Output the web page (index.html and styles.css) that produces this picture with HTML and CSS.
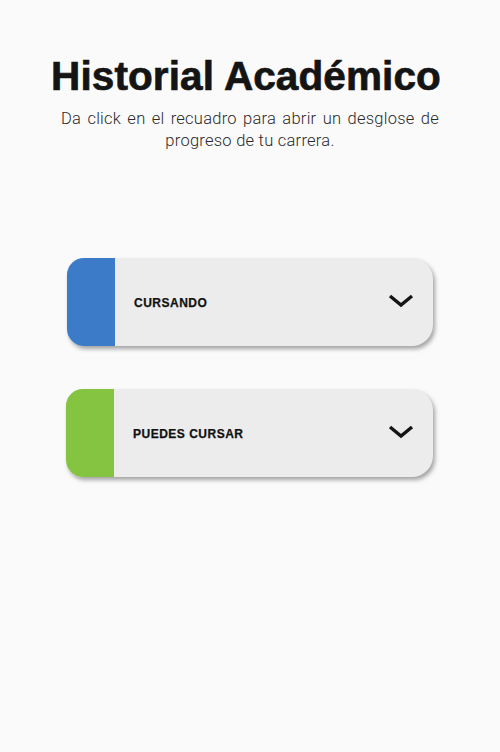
FILE: index.html
```html
<!DOCTYPE html>
<html lang="es">
<head>
<meta charset="utf-8">
<title>Historial Académico</title>
<link rel="stylesheet" href="styles.css">
</head>
<body>
<main class="page">
  <h1 class="title">Historial Académico</h1>
  <p class="subtitle">Da click en el recuadro para abrir un desglose de progreso de tu carrera.</p>
  <div class="cards">
    <div class="card">
      <div class="stripe stripe-blue"></div>
      <div class="card-body">
        <span class="label">CURSANDO</span>
        <svg class="chev" width="26" height="14" viewBox="0 0 26 14"><polyline points="2,2 13,11 24,2" fill="none" stroke="#151515" stroke-width="3.4"/></svg>
      </div>
    </div>
    <div class="card card-2">
      <div class="stripe stripe-green"></div>
      <div class="card-body">
        <span class="label">PUEDES CURSAR</span>
        <svg class="chev" width="26" height="14" viewBox="0 0 26 14"><polyline points="2,2 13,11 24,2" fill="none" stroke="#151515" stroke-width="3.4"/></svg>
      </div>
    </div>
  </div>
</main>
</body>
</html>
```

FILE: styles.css
```css
html, body {
  margin: 0;
  padding: 0;
  background: #fafafa;
}
body {
  width: 500px;
  height: 752px;
  font-family: "Liberation Sans", Arial, sans-serif;
  color: #111;
}
.page {
  display: flex;
  flex-direction: column;
  align-items: center;
}
.title {
  margin: 52px 8px 0 0;
  font-size: 40.5px;
  line-height: 48px;
  font-weight: 700;
  color: #141414;
  letter-spacing: 0.1px;
  -webkit-text-stroke: 0.7px #141414;
}
.subtitle {
  margin: 8px 0 0 0;
  width: 378px;
  font-family: Roboto, "Liberation Sans", sans-serif;
  font-weight: 300;
  font-size: 16.5px;
  letter-spacing: 0.25px;
  line-height: 22px;
  color: #2a2a2a;
  text-align: justify;
  text-align-last: center;
}
.cards {
  margin-top: 106px;
  display: flex;
  flex-direction: column;
  gap: 43px;
  width: 366px;
}
.card {
  display: flex;
  height: 88px;
  border-radius: 17px 21px 21px 17px;
  background: #ececec;
  box-shadow: 2px 3px 4px rgba(0, 0, 0, 0.35);
  overflow: hidden;
}
.card-2 {
  margin-left: -1px;
}
.stripe {
  width: 48px;
  flex: none;
}
.stripe-blue { background: #3b7bc8; }
.stripe-green { background: #85c440; }
.card-body {
  flex: 1;
  display: flex;
  align-items: center;
  justify-content: space-between;
  padding: 0 19px 0 19px;
}
.label {
  font-size: 12px;
  font-weight: 700;
  letter-spacing: 0.5px;
  color: #111;
  margin-top: 1px;
  -webkit-text-stroke: 0.25px #111;
}
.chev {
  display: block;
  margin-top: -2px;
}
```
